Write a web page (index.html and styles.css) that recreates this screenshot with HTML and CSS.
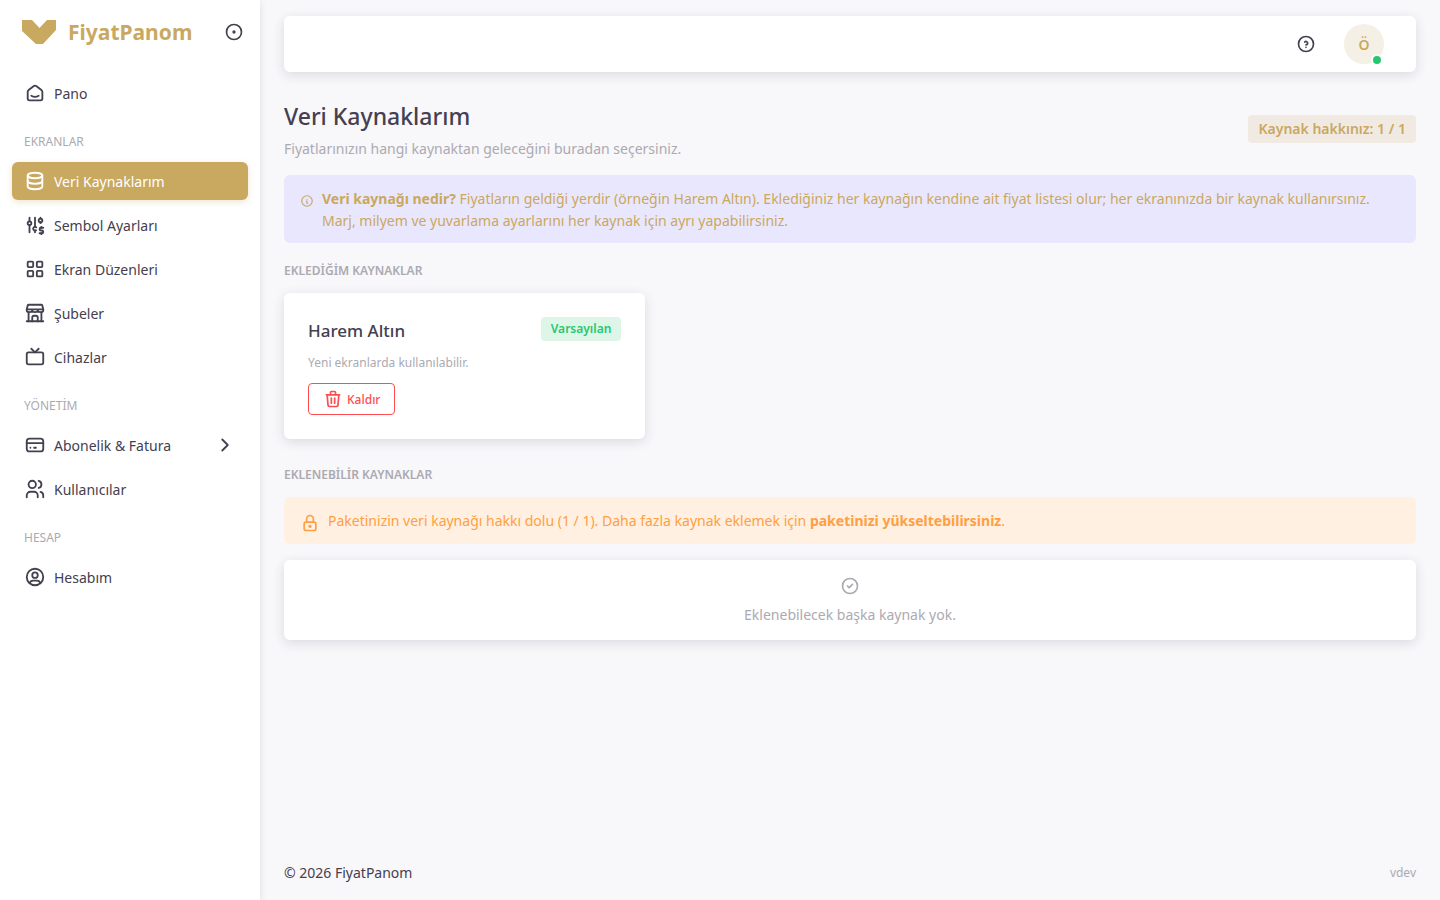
FILE: index.html
```html
<!DOCTYPE html>
<html lang="tr">
<head>
    <meta charset="utf-8">
    <meta name="viewport" content="width=device-width, initial-scale=1">
    <title>Veri Kaynaklarım - FiyatPanom</title>
    <link rel="stylesheet" href="styles.css">
</head>
<body>
    <div class="layout">
        <aside class="sidebar">
            <div class="brand">
                <a class="brand-link" href="#">
                    <svg class="brand-logo" viewBox="0 0 34 24"><path d="M0 0h10l7.500 8l7.500 -8h9v10l-13 14h-7l-14 -13z"/></svg>
                    <span>FiyatPanom</span>
                </a>
                <button class="icon-button" type="button" aria-label="Menü">
                    <svg class="icon icon-20" viewBox="0 0 24 24"><circle cx="12" cy="12" r="9"/><circle cx="12" cy="12" r="1"/></svg>
                </button>
            </div>

            <nav class="menu">
                <a class="menu-item" href="#">
                    <svg class="icon" viewBox="0 0 24 24"><path d="M19 8.710l-5.333 -4.148a2.666 2.666 0 0 0 -3.274 0l-5.334 4.148a2.665 2.665 0 0 0 -1.029 2.105v7.200a2 2 0 0 0 2 2h12a2 2 0 0 0 2 -2v-7.200c0 -.823 -.380 -1.600 -1.030 -2.105"/><path d="M16 15c-2.210 1.333 -5.792 1.333 -8 0"/></svg>
                    <span>Pano</span>
                </a>

                <div class="menu-header">EKRANLAR</div>
                <a class="menu-item active" href="#">
                    <svg class="icon" viewBox="0 0 24 24"><ellipse cx="12" cy="6" rx="8" ry="3"/><path d="M4 6v6a8 3 0 0 0 16 0v-6"/><path d="M4 12v6a8 3 0 0 0 16 0v-6"/></svg>
                    <span>Veri Kaynaklarım</span>
                </a>
                <a class="menu-item" href="#">
                    <svg class="icon" viewBox="0 0 24 24"><path d="M4 10a2 2 0 1 0 4 0a2 2 0 0 0 -4 0"/><path d="M6 4v4"/><path d="M6 12v8"/><path d="M13.366 14.540a2 2 0 1 0 -.216 3.097"/><path d="M12 4v10"/><path d="M12 18v2"/><path d="M16 7a2 2 0 1 0 4 0a2 2 0 0 0 -4 0"/><path d="M18 4v1"/><path d="M18 9v1"/><path d="M21 15h-2.500a1.500 1.500 0 0 0 0 3h1a1.500 1.500 0 0 1 0 3h-2.500"/><path d="M19 21v1m0 -8v1"/></svg>
                    <span>Sembol Ayarları</span>
                </a>
                <a class="menu-item" href="#">
                    <svg class="icon" viewBox="0 0 24 24"><rect x="4" y="4" width="6" height="6" rx="1"/><rect x="14" y="4" width="6" height="6" rx="1"/><rect x="4" y="14" width="6" height="6" rx="1"/><rect x="14" y="14" width="6" height="6" rx="1"/></svg>
                    <span>Ekran Düzenleri</span>
                </a>
                <a class="menu-item" href="#">
                    <svg class="icon" viewBox="0 0 24 24"><path d="M3 21h18"/><path d="M5 3h14a1 1 0 0 1 1 1l1 4v1a2 2 0 0 1 -2 2h-1a3 2 0 0 1 -3 -2a3 2 0 0 1 -6 0a3 2 0 0 1 -3 2h-1a2 2 0 0 1 -2 -2v-1l1 -4a1 1 0 0 1 1 -1z"/><path d="M3 8h18"/><path d="M5 21v-10"/><path d="M19 21v-10"/><path d="M9 21v-4a2 2 0 0 1 2 -2h2a2 2 0 0 1 2 2v4"/></svg>
                    <span>Şubeler</span>
                </a>
                <a class="menu-item" href="#">
                    <svg class="icon" viewBox="0 0 24 24"><rect x="3" y="7" width="18" height="13" rx="2"/><path d="M16 3l-4 4l-4 -4"/></svg>
                    <span>Cihazlar</span>
                </a>

                <div class="menu-header">YÖNETİM</div>
                <a class="menu-item" href="#">
                    <svg class="icon" viewBox="0 0 24 24"><rect x="3" y="5" width="18" height="14" rx="3"/><path d="M3 10h18"/><path d="M7 15h.010"/><path d="M11 15h2"/></svg>
                    <span>Abonelik &amp; Fatura</span>
                    <svg class="icon menu-arrow" viewBox="0 0 24 24"><path d="M9 6l6 6l-6 6"/></svg>
                </a>
                <a class="menu-item" href="#">
                    <svg class="icon" viewBox="0 0 24 24"><circle cx="9" cy="7" r="4"/><path d="M3 21v-2a4 4 0 0 1 4 -4h4a4 4 0 0 1 4 4v2"/><path d="M16 3.130a4 4 0 0 1 0 7.750"/><path d="M21 21v-2a4 4 0 0 0 -3 -3.850"/></svg>
                    <span>Kullanıcılar</span>
                </a>

                <div class="menu-header">HESAP</div>
                <a class="menu-item" href="#">
                    <svg class="icon" viewBox="0 0 24 24"><circle cx="12" cy="12" r="9"/><circle cx="12" cy="10" r="3"/><path d="M6.168 18.849a4 4 0 0 1 3.832 -2.849h4a4 4 0 0 1 3.834 2.855"/></svg>
                    <span>Hesabım</span>
                </a>
            </nav>
        </aside>

        <div class="page">
            <header class="navbar">
                <button class="icon-button" type="button" aria-label="Yardım">
                    <svg class="icon icon-20" viewBox="0 0 24 24"><circle cx="12" cy="12" r="9"/><path d="M12 16v.010"/><path d="M12 13a2 2 0 0 0 .914 -3.782a1.980 1.980 0 0 0 -2.414 .483"/></svg>
                </button>
                <button class="avatar" type="button">Ö</button>
            </header>

            <main class="content">
                <div class="page-head">
                    <div>
                        <h1>Veri Kaynaklarım</h1>
                        <p class="subtitle">Fiyatlarınızın hangi kaynaktan geleceğini buradan seçersiniz.</p>
                    </div>
                    <span class="badge badge-quota">Kaynak hakkınız: 1 / 1</span>
                </div>

                <div class="alert alert-info">
                    <svg class="icon icon-14" viewBox="0 0 24 24"><circle cx="12" cy="12" r="9"/><path d="M12 9h.010"/><path d="M11 12h1v4h1"/></svg>
                    <p><strong>Veri kaynağı nedir?</strong> Fiyatların geldiği yerdir (örneğin Harem Altın). Eklediğiniz her kaynağın kendine ait fiyat listesi olur; her ekranınızda bir kaynak kullanırsınız. Marj, milyem ve yuvarlama ayarlarını her kaynak için ayrı yapabilirsiniz.</p>
                </div>

                <h2 class="section-title">EKLEDİĞİM KAYNAKLAR</h2>
                <div class="source-grid">
                    <div class="card">
                        <div class="card-head">
                            <h3>Harem Altın</h3>
                            <span class="badge badge-success">Varsayılan</span>
                        </div>
                        <p class="card-text">Yeni ekranlarda kullanılabilir.</p>
                        <button class="btn-remove" type="button">
                            <svg class="icon icon-20" viewBox="0 0 24 24"><path d="M4 7h16"/><path d="M10 11v6"/><path d="M14 11v6"/><path d="M5 7l1 12a2 2 0 0 0 2 2h8a2 2 0 0 0 2 -2l1 -12"/><path d="M9 7v-3a1 1 0 0 1 1 -1h4a1 1 0 0 1 1 1v3"/></svg>
                            Kaldır
                        </button>
                    </div>
                </div>

                <h2 class="section-title">EKLENEBİLİR KAYNAKLAR</h2>
                <div class="alert alert-warning">
                    <svg class="icon icon-20" viewBox="0 0 24 24"><rect x="5" y="11" width="14" height="10" rx="2"/><circle cx="12" cy="16" r="1"/><path d="M8 11v-4a4 4 0 1 1 8 0v4"/></svg>
                    <p>Paketinizin veri kaynağı hakkı dolu (1 / 1). Daha fazla kaynak eklemek için <a href="#">paketinizi yükseltebilirsiniz</a>.</p>
                </div>
                <div class="empty">
                    <svg class="icon icon-20" viewBox="0 0 24 24"><circle cx="12" cy="12" r="9"/><path d="M9 12l2 2l4 -4"/></svg>
                    <p>Eklenebilecek başka kaynak yok.</p>
                </div>
            </main>

            <footer class="footer">
                <span>© 2026 FiyatPanom</span>
                <span class="version">vdev</span>
            </footer>
        </div>
    </div>
</body>
</html>
```
FILE: styles.css
```css
* {
    box-sizing: border-box;
}

body {
    margin: 0;
    font-family: "Segoe UI", "Noto Sans", "Open Sans", sans-serif;
    font-size: 14px;
    line-height: 22px;
    color: #444050;
    background-color: #f8f7fa;
}

h1, h2, h3, p {
    margin: 0;
}

a {
    color: inherit;
    text-decoration: none;
}

button {
    font-family: inherit;
    cursor: pointer;
}

.layout {
    display: flex;
    min-height: 100vh;
}

/* Icons */
.icon {
    flex: none;
    width: 22px;
    height: 22px;
    fill: none;
    stroke: currentColor;
    stroke-width: 2;
    stroke-linecap: round;
    stroke-linejoin: round;
}

.icon-20 {
    width: 20px;
    height: 20px;
}

.icon-14 {
    width: 14px;
    height: 14px;
}

.icon-button {
    display: flex;
    padding: 0;
    border: none;
    background: none;
    color: inherit;
}

/* Sidebar */
.sidebar {
    flex: none;
    width: 260px;
    background-color: #fff;
    box-shadow: 0 2px 8px rgba(47, 43, 61, 0.12);
}

.brand {
    display: flex;
    align-items: center;
    justify-content: space-between;
    height: 64px;
    padding: 0 16px 0 22px;
}

.brand-link {
    display: flex;
    align-items: center;
    gap: 12px;
    font-size: 21px;
    line-height: 24px;
    font-weight: 700;
    color: #c9a85f;
}

.brand-logo {
    width: 34px;
    height: 24px;
    fill: currentColor;
}

.menu {
    display: flex;
    flex-direction: column;
    gap: 6px;
    padding: 10px 12px;
}

.menu-item {
    display: flex;
    align-items: center;
    gap: 8px;
    height: 38px;
    padding: 0 12px;
    border-radius: 6px;
    line-height: 23px;
}

.menu-item.active {
    background-color: #c9a85f;
    color: #fff;
    box-shadow: 0 2px 6px rgba(201, 168, 95, 0.3);
}

.menu-arrow {
    margin-left: auto;
}

.menu-header {
    height: 38px;
    padding: 14px 12px 0;
    font-size: 12px;
    line-height: 20px;
    color: #acaab1;
}

/* Page */
.page {
    flex: 1;
    display: flex;
    flex-direction: column;
    padding: 16px 24px 0;
}

.navbar {
    display: flex;
    align-items: center;
    justify-content: flex-end;
    gap: 28px;
    height: 56px;
    padding: 0 32px;
    border-radius: 6px;
    background-color: #fff;
    box-shadow: 0 3px 12px rgba(47, 43, 61, 0.14);
}

.avatar {
    position: relative;
    width: 40px;
    height: 40px;
    padding: 0;
    border: none;
    border-radius: 50%;
    background-color: #f5f0e5;
    color: #c9a85f;
    font-size: 14px;
    font-weight: 600;
}

/* Online dot */
.avatar::after {
    content: "";
    box-sizing: border-box;
    position: absolute;
    right: 1px;
    bottom: -2px;
    width: 12px;
    height: 12px;
    border: 2px solid #fff;
    border-radius: 50%;
    background-color: #28c76f;
}

.content {
    flex: 1;
    padding-top: 26px;
}

.page-head {
    display: flex;
    align-items: center;
    justify-content: space-between;
    margin-bottom: 15px;
}

h1 {
    margin-bottom: 4px;
    font-size: 23px;
    line-height: 36px;
    font-weight: 500;
}

.subtitle {
    color: #acaab1;
}

.badge {
    border-radius: 4px;
    font-weight: 600;
}

.badge-quota {
    padding: 3px 10px;
    background-color: #f1eae3;
    color: #c9a85f;
}

.badge-success {
    padding: 2px 10px;
    font-size: 12px;
    line-height: 20px;
    background-color: #ddf6e8;
    color: #28c76f;
}

.alert {
    display: flex;
    gap: 8px;
    padding: 13px 16px 11px;
    border-radius: 6px;
}

.alert-info {
    margin-bottom: 16px;
    background-color: #e9e7fd;
    color: #c9a85f;
}

.alert-info .icon {
    margin-top: 6px;
}

.alert-warning {
    margin-bottom: 16px;
    background-color: #fff0e1;
    color: #ff9f43;
}

.alert-warning .icon {
    margin-top: 3px;
}

.alert-warning a {
    font-weight: 700;
}

.section-title {
    padding-top: 1px;
    margin-bottom: 11px;
    font-size: 12px;
    font-weight: 600;
    color: #acaab1;
}

.source-grid {
    display: grid;
    grid-template-columns: repeat(3, 1fr);
    gap: 24px;
    margin-bottom: 24px;
}

.card {
    padding: 24px;
    border-radius: 6px;
    background-color: #fff;
    box-shadow: 0 3px 12px rgba(47, 43, 61, 0.14);
}

.card-head {
    display: flex;
    align-items: flex-start;
    justify-content: space-between;
    margin-bottom: 8px;
}

h3 {
    font-size: 17px;
    line-height: 28px;
    font-weight: 500;
}

.card-text {
    margin-bottom: 10px;
    font-size: 12px;
    line-height: 20px;
    color: #acaab1;
}

.btn-remove {
    display: flex;
    align-items: center;
    gap: 4px;
    height: 32px;
    padding: 0 14px;
    border: 1px solid #ff4c51;
    border-radius: 4px;
    background-color: transparent;
    color: #ff4c51;
    font-size: 12px;
    font-weight: 500;
}

.empty {
    display: flex;
    flex-direction: column;
    align-items: center;
    gap: 8px;
    padding: 16px 16px 14px;
    border-radius: 6px;
    background-color: #fff;
    color: #acaab1;
    box-shadow: 0 3px 12px rgba(47, 43, 61, 0.14);
}

.footer {
    display: flex;
    align-items: center;
    justify-content: space-between;
    height: 54px;
}

.version {
    font-size: 12px;
    color: #acaab1;
}
```
